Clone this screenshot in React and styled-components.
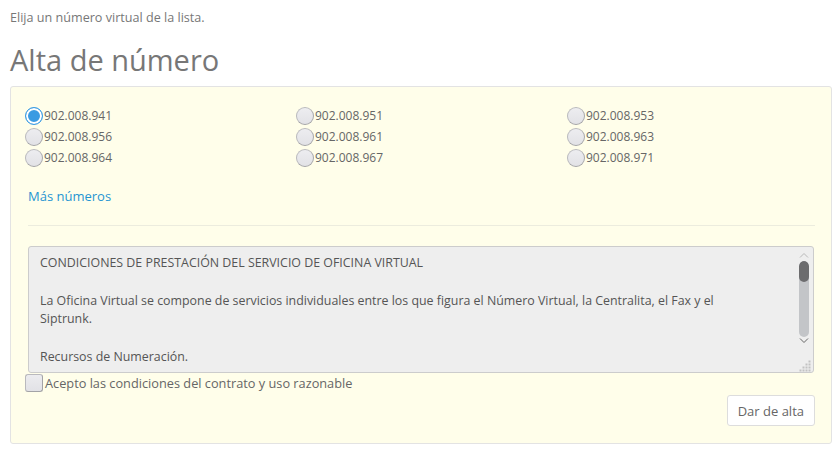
import styled, { createGlobalStyle } from 'styled-components';

const GlobalStyle = createGlobalStyle`
  html, body {
    margin: 0;
    padding: 0;
    background: #ffffff;
  }
  body {
    padding: 0 8px 0 10px;
    font-family: "Open Sans", "Liberation Sans", sans-serif;
    color: #666666;
  }
`;

const S = {};

S.Intro = styled.p`
  margin: 0;
  padding-top: 9px;
  font-size: 12.6px;
  line-height: 18px;
  color: #777777;
`;

S.Title = styled.h1`
  margin: 15px 0 8px;
  font-size: 29px;
  font-weight: 400;
  line-height: 36px;
  color: #777777;
`;

S.Panel = styled.form`
  background: #fffeea;
  border: 1px solid #e3e3e3;
  border-radius: 3px;
  padding: 18px 16px 17px 14px;
`;

S.Numbers = styled.div`
  display: grid;
  grid-template-columns: 271px 271px 1fr;
`;

S.Option = styled.label`
  display: flex;
  align-items: center;
  height: 21px;
  font-size: 12px;
  color: #666666;
  cursor: pointer;
`;

S.Radio = styled.input.attrs({ type: 'radio' })`
  appearance: none;
  margin: 0 1px 0 0;
  width: 18px;
  height: 18px;
  border-radius: 50%;
  border: 1px solid #b9b9bd;
  border-right-color: #a8a8ac;
  border-bottom-color: #a3a3a7;
  background: linear-gradient(#ededf0, #e2e2e6);
  box-sizing: border-box;

  &:checked {
    border: 1px solid #3d9de4;
    background: #3a9be2;
    box-shadow: inset 0 0 0 2px #ffffff;
  }
`;

S.More = styled.a`
  display: inline-block;
  margin: 19px 0 0 3px;
  font-size: 13px;
  line-height: 18px;
  color: #1f95d2;
  text-decoration: none;
`;

S.Rule = styled.hr`
  margin: 19px 0 20px 3px;
  border: 0;
  border-top: 1px solid #ececde;
`;

S.TermsBox = styled.div`
  position: relative;
  margin-left: 3px;
`;

S.Terms = styled.textarea`
  display: block;
  box-sizing: border-box;
  width: calc(100% - 1px);
  height: 127px;
  padding: 7px 48px 6px 11px;
  background: #eeeeee;
  border: 1px solid #cccccc;
  border-radius: 3px;
  font-family: "Open Sans", "Liberation Sans", sans-serif;
  font-size: 12.4px;
  line-height: 18.8px;
  color: #555555;
  resize: none;
  overflow: hidden;
  outline: none;
`;

S.Scroll = styled.div`
  position: absolute;
  top: 0;
  bottom: 0;
  right: 4px;
  width: 14px;
  display: flex;
  flex-direction: column;
  align-items: center;
  padding: 6px 0 1px;
  box-sizing: border-box;
  pointer-events: none;
`;

S.Track = styled.div`
  width: 10px;
  height: 76px;
  margin-top: 3px;
  border-radius: 5px;
  background: #c3c5c8;
  overflow: hidden;
`;

S.Thumb = styled.div`
  width: 10px;
  height: 21px;
  border-radius: 5px;
  background: #6c6c6e;
`;

S.Chevron = styled.svg`
  display: block;
  margin-top: ${(p) => p.$gap || 0}px;
`;

S.Grip = styled.svg`
  display: block;
  margin-top: auto;
  align-self: flex-end;
`;

S.Accept = styled.label`
  display: flex;
  align-items: center;
  height: 19px;
  font-size: 12.75px;
  color: #666666;
`;

S.Check = styled.input.attrs({ type: 'checkbox' })`
  appearance: none;
  margin: 0 2px 0 0;
  width: 18px;
  height: 18px;
  box-sizing: border-box;
  border-radius: 3px;
  border: 1px solid #b9b9bd;
  border-right-color: #a3a3a7;
  border-bottom-color: #a3a3a7;
  background: linear-gradient(#ececef, #e2e2e6);
`;

S.Actions = styled.div`
  display: flex;
  justify-content: flex-end;
  margin-top: 3px;
`;

S.Button = styled.button`
  height: 31px;
  padding: 0 10px;
  background: #ffffff;
  border: 1px solid #dddddd;
  border-radius: 3px;
  font-family: "Open Sans", "Liberation Sans", sans-serif;
  font-size: 13px;
  color: #666666;
  cursor: pointer;
`;

const numbers = [
  '902.008.941', '902.008.951', '902.008.953',
  '902.008.956', '902.008.961', '902.008.963',
  '902.008.964', '902.008.967', '902.008.971',
];

const terms = `CONDICIONES DE PRESTACIÓN DEL SERVICIO DE OFICINA VIRTUAL

La Oficina Virtual se compone de servicios individuales entre los que figura el Número Virtual, la Centralita, el Fax y el Siptrunk.

Recursos de Numeración.

El cliente podrá elegir entre los números disponibles en cada momento.`;

const gripDots = [];
for (let r = 0; r < 4; r++) {
  for (let c = 0; c < 4; c++) {
    if (r + c >= 3) gripDots.push([c * 3 + 1.5, r * 3 + 1.5]);
  }
}

const ScrollDecor = () => (
  <S.Scroll aria-hidden="true">
    <S.Chevron width="10" height="6" viewBox="0 0 10 6">
      <path d="M1 5.5 L5 1.5 L9 5.5" fill="none" stroke="#b8b8b8" strokeWidth="1" />
    </S.Chevron>
    <S.Track>
      <S.Thumb />
    </S.Track>
    <S.Chevron width="10" height="6" viewBox="0 0 10 6" $gap={1}>
      <path d="M1 0.5 L5 4.5 L9 0.5" fill="none" stroke="#666666" strokeWidth="1" />
    </S.Chevron>
    <S.Grip width="12" height="12" viewBox="0 0 12 12">
      {gripDots.map(([x, y]) => (
        <rect key={`${x}-${y}`} x={x - 1} y={y - 1} width="2" height="2" fill="#c2c2c2" />
      ))}
    </S.Grip>
  </S.Scroll>
);

const App = () => {
  return (
    <>
      <GlobalStyle />
      <S.Intro>Elija un número virtual de la lista.</S.Intro>
      <S.Title>Alta de número</S.Title>
      <S.Panel onSubmit={(e) => e.preventDefault()}>
        <S.Numbers>
          {numbers.map((n, i) => (
            <S.Option key={n}>
              <S.Radio name="numero" value={n} defaultChecked={i === 0} />
              {n}
            </S.Option>
          ))}
        </S.Numbers>
        <S.More href="#">Más números</S.More>
        <S.Rule />
        <S.TermsBox>
          <S.Terms readOnly defaultValue={terms} />
          <ScrollDecor />
        </S.TermsBox>
        <S.Accept>
          <S.Check />
          Acepto las condiciones del contrato y uso razonable
        </S.Accept>
        <S.Actions>
          <S.Button type="submit">Dar de alta</S.Button>
        </S.Actions>
      </S.Panel>
    </>
  );
};

export default App;
